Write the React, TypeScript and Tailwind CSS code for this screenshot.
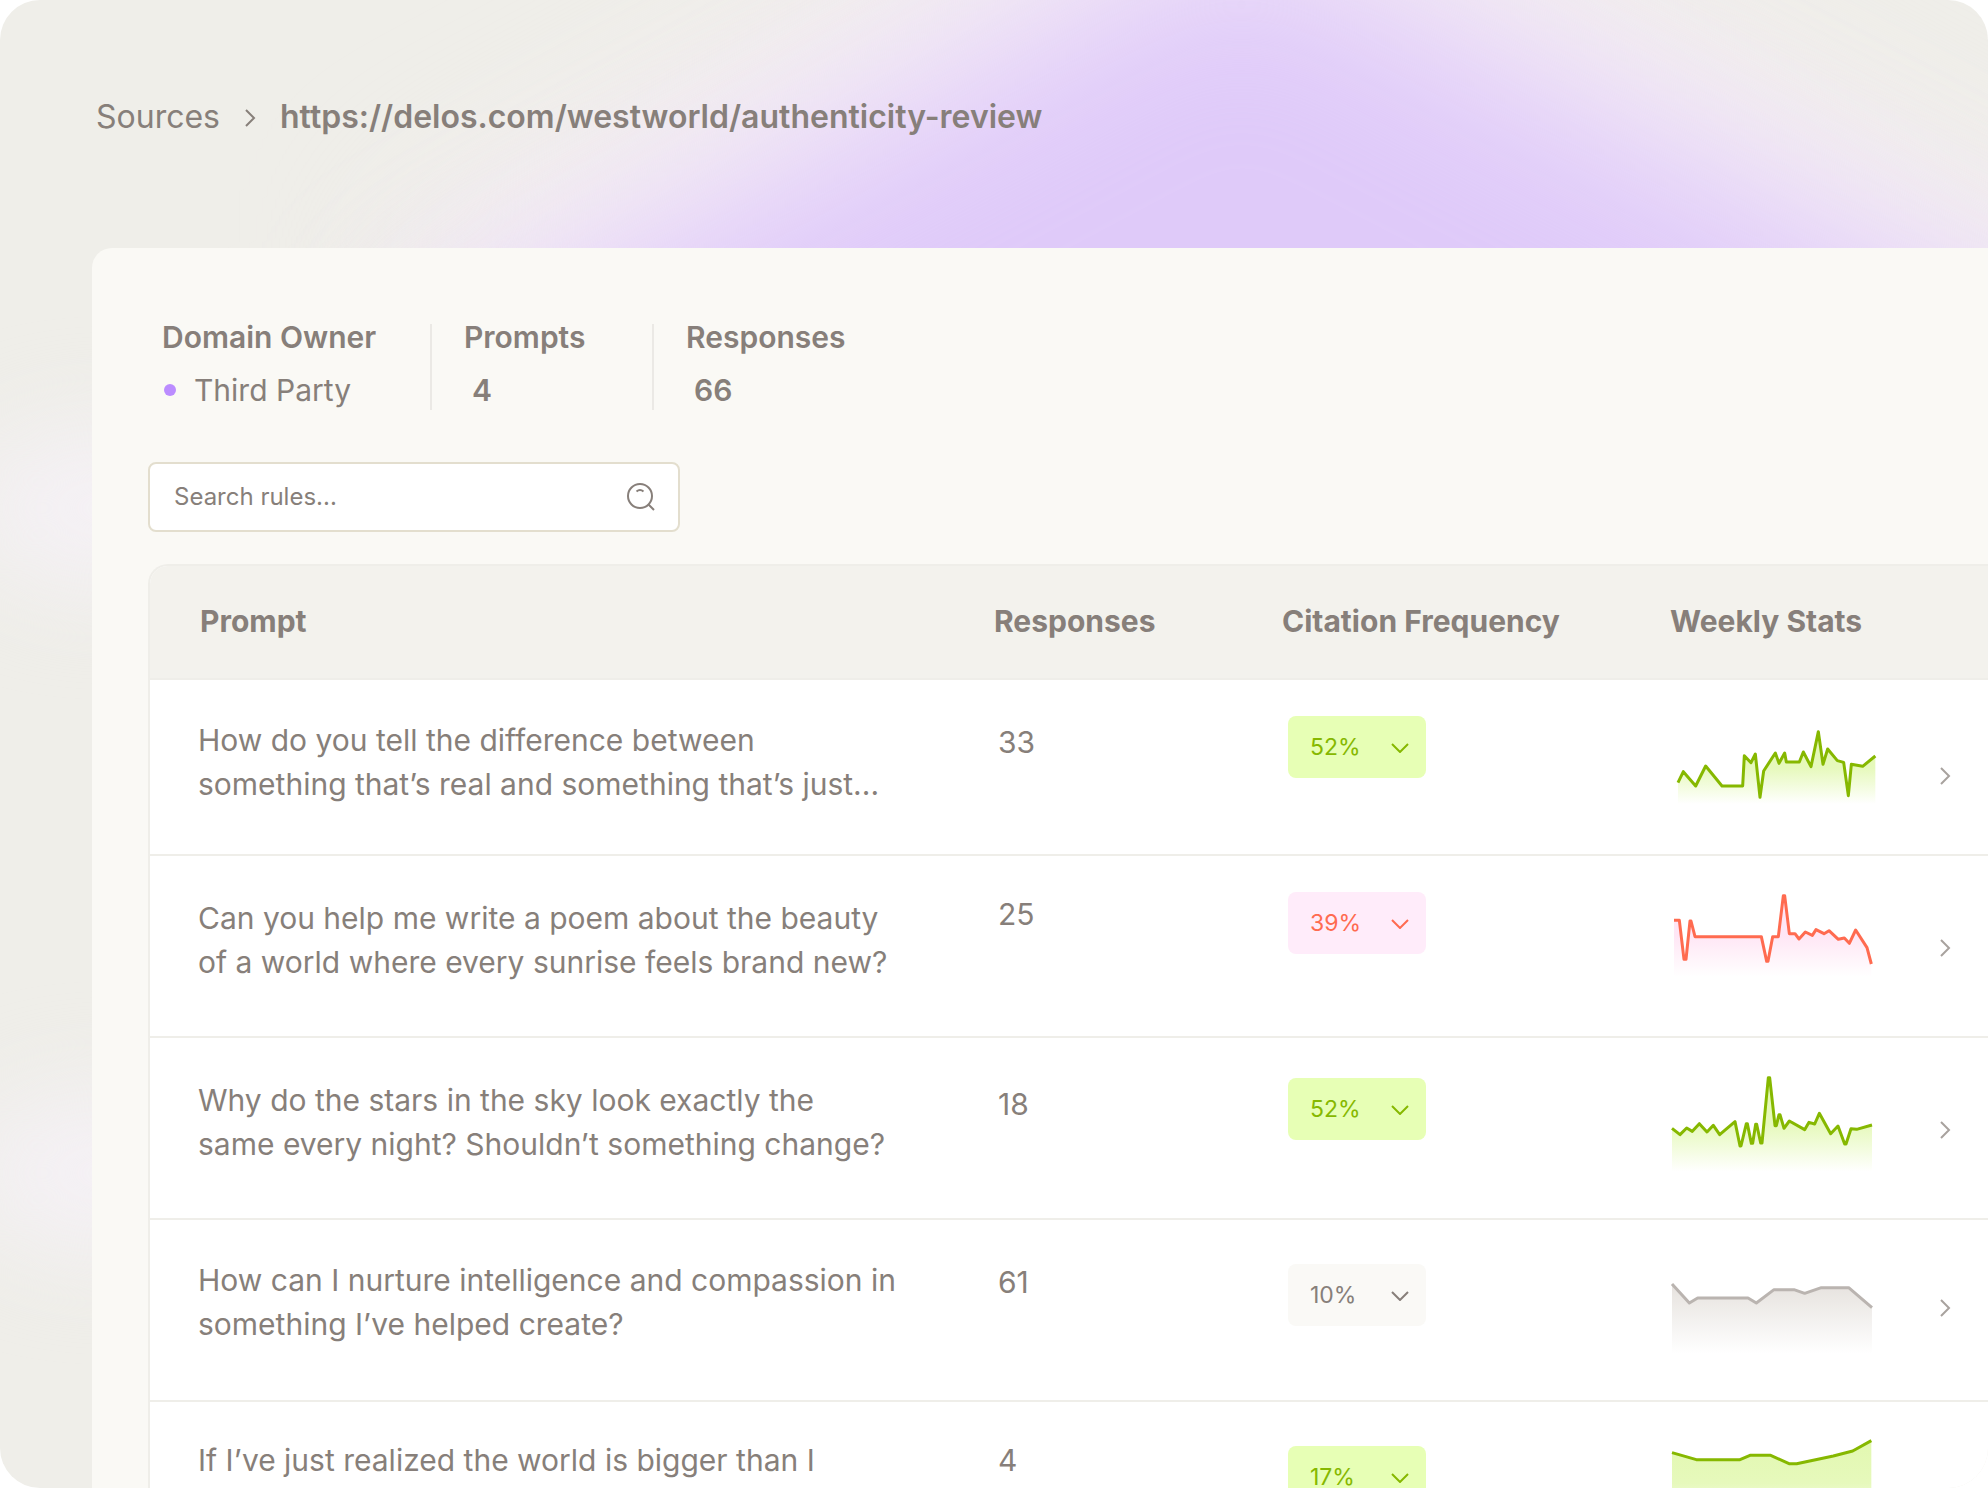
import React, { useState } from "react";

type Tone = "green" | "red" | "gray";

type PromptRow = {
  prompt: string;
  responses: number;
  frequency: string;
  tone: Tone;
  line: string;
  base: number;
  // top padding of each cell in the row
  pad: { prompt: string; responses: string; badge: string; arrow: string };
};

const rows: PromptRow[] = [
  {
    prompt: "How do you tell the difference between something that’s real and something that’s just...",
    responses: 33,
    frequency: "52%",
    tone: "green",
    line: "24,236 40,203 77,246 107,186 156,246 218,246 223,155 243,176 256,150 270,280 281,201 316,147 327,178 344,147 349,174 388,174 400,144 423,188 445,83 459,181 473,135 502,170 521,175 535,275 544,181 578,187 616,156",
    base: 300,
    pad: { prompt: "pt-[38px]", responses: "pt-10", badge: "pt-9", arrow: "pt-21" },
  },
  {
    prompt: "Can you help me write a poem about the beauty of a world where every sunrise feels brand new?",
    responses: 25,
    frequency: "39%",
    tone: "red",
    line: "12,121 28,121 42,238 48,238 60,123 63,123 75,170 274,170 290,244 294,244 308,170 325,170 340,47 344,47 358,161 375,161 387,177 406,156 427,166 438,149 462,161 477,152 505,178 523,174 538,190 557,150 591,203 604,252",
    base: 290,
    pad: { prompt: "pt-10", responses: "pt-9", badge: "pt-9", arrow: "pt-20" },
  },
  {
    prompt: "Why do the stars in the sky look exactly the same every night? Shouldn’t something change?",
    responses: 18,
    frequency: "52%",
    tone: "green",
    line: "6,199 30,218 50,198 67,208 88,185 111,210 130,190 149,218 195,179 210,252 213,252 229,185 232,185 244,244 248,244 257,187 260,187 272,243 276,243 295,47 299,47 315,191 319,191 327,158 330,158 342,199 358,177 404,203 417,181 434,186 448,154 482,215 504,192 524,246 528,246 543,200 560,202 606,189",
    base: 329,
    pad: { prompt: "pt-10", responses: "pt-11", badge: "pt-10", arrow: "pt-20" },
  },
  {
    prompt: "How can I nurture intelligence and compassion in something I’ve helped create?",
    responses: 61,
    frequency: "10%",
    tone: "gray",
    line: "6,120 58,177 83,162 234,162 259,177 312,137 372,137 404,148 454,131 536,131 606,191",
    base: 328,
    pad: { prompt: "pt-[38px]", responses: "pt-10", badge: "pt-11", arrow: "pt-19" },
  },
  {
    prompt: "If I’ve just realized the world is bigger than I",
    responses: 4,
    frequency: "17%",
    tone: "green",
    line: "6,80 79,101 210,101 240,88 302,88 357,113 380,113 490,90 548,75 604,44",
    base: 300,
    pad: { prompt: "pt-9", responses: "pt-9", badge: "pt-11", arrow: "pt-24" },
  },
];

const badgeBackground: Record<Tone, string> = {
  green: "bg-[#e7ffb5]",
  red: "bg-[#ffecfa]",
  gray: "bg-[#faf9f6]",
};

const badgeText: Record<Tone, string> = {
  green: "text-[#86b800]",
  red: "text-[#ff6b50]",
  gray: "text-[#877f7a]",
};

const chartTone: Record<Tone, { stroke: string; fill: string; middle: number }> = {
  green: { stroke: "#86b800", fill: "#e2f8b0", middle: 0.85 },
  red: { stroke: "#ff6b50", fill: "#ffe4f4", middle: 0.9 },
  gray: { stroke: "#bab4b0", fill: "#e6e2de", middle: 0.5 },
};

const Sparkline: React.FC<{ id: string; line: string; base: number; tone: Tone }> = ({ id, line, base, tone }) => {
  const points = line.split(" ");
  const first = points[0].split(",")[0];
  const last = points[points.length - 1].split(",")[0];
  const { stroke, fill, middle } = chartTone[tone];

  return (
    <svg viewBox="0 0 630 360" className="block h-30 w-[210px]" aria-hidden="true">
      <defs>
        <linearGradient id={id} x1="0" y1="0" x2="0" y2="1">
          <stop offset="0" stopColor={fill} />
          <stop offset="0.5" stopColor={fill} stopOpacity={middle} />
          <stop offset="1" stopColor={fill} stopOpacity="0" />
        </linearGradient>
      </defs>
      <polygon points={`${first},${base} ${line} ${last},${base}`} fill={`url(#${id})`} />
      <polyline points={line} fill="none" stroke={stroke} strokeWidth="9" strokeLinejoin="round" />
    </svg>
  );
};

const FrequencySelect: React.FC<{ value: string; tone: Tone }> = ({ value, tone }) => (
  <div className={`relative ml-1.5 w-[138px] rounded-lg ${badgeBackground[tone]} ${badgeText[tone]}`}>
    <select
      aria-label="Citation frequency"
      defaultValue={value}
      className="block h-[62px] w-full appearance-none pl-[22px] text-[23px] outline-none"
    >
      <option>{value}</option>
    </select>
    <svg
      viewBox="0 0 18 10"
      className="pointer-events-none absolute top-[27px] right-[17px] h-2.5 w-[18px]"
      fill="none"
      stroke="currentColor"
      strokeWidth="2"
      aria-hidden="true"
    >
      <path d="M1 1l8 8 8-8" />
    </svg>
  </div>
);

const Glow: React.FC = () => (
  <svg
    className="absolute inset-0 -z-10 h-full w-full"
    viewBox="0 0 1988 1488"
    preserveAspectRatio="none"
    aria-hidden="true"
  >
    <defs>
      <filter id="soft" x="-50%" y="-50%" width="200%" height="200%" colorInterpolationFilters="sRGB">
        <feGaussianBlur stdDeviation="82" />
      </filter>
      <filter id="softer" x="-100%" y="-200%" width="300%" height="500%" colorInterpolationFilters="sRGB">
        <feGaussianBlur stdDeviation="50" />
      </filter>
    </defs>
    {/* pale halo under the purple peak */}
    <polygon points="1240,-190 2400,430 2400,900 420,900 420,250" fill="#f8f1f6" filter="url(#soft)" />
    <polygon points="1240,-82 2400,516 2400,900 420,900 420,353" fill="#dfcaf9" filter="url(#soft)" />
    <ellipse cx="110" cy="508" rx="140" ry="75" fill="#f5f1f6" filter="url(#softer)" />
    <ellipse cx="110" cy="1173" rx="140" ry="75" fill="#f5f1f6" filter="url(#softer)" />
  </svg>
);

const App: React.FC = () => {
  const [search, setSearch] = useState("");

  return (
    <div className="relative isolate flex h-screen flex-col overflow-hidden rounded-[40px] bg-[#efeee9] font-['Inter',sans-serif] text-[#877f7a]">
      <Glow />

      {/* Breadcrumb */}
      <nav aria-label="Breadcrumb" className="flex h-[248px] shrink-0 items-start gap-6 pt-24 pl-24 text-[32px] leading-[42px]">
        <a href="#sources">Sources</a>
        <svg viewBox="0 0 12 20" className="mt-3 h-5 w-3" fill="none" stroke="currentColor" strokeWidth="2" aria-hidden="true">
          <path d="M2 2l8 8-8 8" />
        </svg>
        <span className="font-semibold">https://delos.com/westworld/authenticity-review</span>
      </nav>

      <main className="ml-[92px] flex-1 rounded-tl-[20px] bg-[#faf9f5] pt-[76px] pl-14">
        {/* Summary */}
        <dl className="flex text-[30px]">
          <div className="h-[86px] w-[284px] border-r-2 border-[#ebe9e5] pl-3.5">
            <dt className="leading-[26px] font-semibold">Domain Owner</dt>
            <dd className="mt-5 flex items-center leading-10">
              <span className="mr-[18px] ml-0.5 size-3 rounded-full bg-[#bb8cff]" />
              Third Party
            </dd>
          </div>
          <div className="h-[86px] w-[222px] border-r-2 border-[#ebe9e5] pl-8">
            <dt className="leading-[26px] font-semibold">Prompts</dt>
            <dd className="mt-5 pl-2 leading-10 font-semibold">4</dd>
          </div>
          <div className="pl-8">
            <dt className="leading-[26px] font-semibold">Responses</dt>
            <dd className="mt-5 pl-2 leading-10 font-semibold">66</dd>
          </div>
        </dl>

        {/* Search */}
        <div className="mt-13 flex h-[70px] w-[532px] items-center rounded-lg border-2 border-[#e3dece] bg-white pr-[22px] pl-6">
          <input
            type="text"
            aria-label="Search rules"
            value={search}
            onChange={(e) => setSearch(e.target.value)}
            placeholder="Search rules..."
            className="h-16 min-w-0 flex-1 pb-0.5 text-2xl outline-none placeholder:text-[#877f7a]"
          />
          <svg viewBox="0 0 32 32" className="size-8" fill="none" stroke="currentColor" strokeWidth="2" aria-hidden="true">
            <circle cx="16" cy="15" r="12" />
            <path d="M12.5 10.5c2-1.7 5-1.7 7 0M24.5 23.5l5.5 5.5" />
          </svg>
        </div>

        {/* Prompts table */}
        <div className="mt-8 overflow-hidden rounded-tl-[20px] border-t-2 border-l-2 border-[#efeee9] bg-white">
          <table className="w-full table-fixed border-separate border-spacing-0 text-left text-[30px]">
            <colgroup>
              <col className="w-[844px]" />
              <col className="w-[288px]" />
              <col className="w-[388px]" />
              <col className="w-[270px]" />
              <col />
            </colgroup>
            <thead className="bg-[#f3f2ed]">
              <tr className="h-[114px] [&>*]:border-b-2 [&>*]:border-[#efeee9] [&>*]:pb-0.5">
                <th className="pl-[50px] font-bold">Prompt</th>
                <th className="font-bold">Responses</th>
                <th className="font-bold">Citation Frequency</th>
                <th className="font-bold">Weekly Stats</th>
                <td></td>
              </tr>
            </thead>
            <tbody>
              {rows.map((row, i) => (
                <tr
                  key={row.prompt}
                  className="h-[182px] align-top leading-11 first:h-44 [&>*]:border-b-2 [&>*]:border-[#efeee9]"
                >
                  <td className={`pr-24 pl-12 ${row.pad.prompt}`}>{row.prompt}</td>
                  <td className={`pl-1 ${row.pad.responses}`}>{row.responses}</td>
                  <td className={row.pad.badge}>
                    <FrequencySelect value={row.frequency} tone={row.tone} />
                  </td>
                  <td className="pt-6">
                    <Sparkline id={`chart-${i}`} line={row.line} base={row.base} tone={row.tone} />
                  </td>
                  <td className={row.pad.arrow}>
                    <button type="button" aria-label="Open prompt" className="block h-6 w-3 text-[#a8a29e]">
                      <svg viewBox="0 0 12 24" className="h-6 w-3" fill="none" stroke="currentColor" strokeWidth="2">
                        <path d="M1 4l8 8-8 8" />
                      </svg>
                    </button>
                  </td>
                </tr>
              ))}
            </tbody>
          </table>
        </div>
      </main>
    </div>
  );
};

export default App;
